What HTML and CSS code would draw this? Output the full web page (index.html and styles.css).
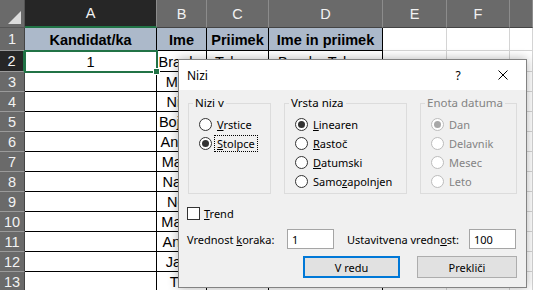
FILE: index.html
```html
<!DOCTYPE html>
<html>
<head>
<meta charset="utf-8">
<title>Nizi</title>
<link rel="stylesheet" href="styles.css">
</head>
<body>

<div class="sheet">
	<div class="corner"><span class="tri"></span></div>
	<div class="ch on">A</div><div class="ch">B</div><div class="ch">C</div><div class="ch">D</div><div class="ch">E</div><div class="ch">F</div><div class="ch"></div>

	<div class="rh">1</div><div class="c b h">Kandidat/ka</div><div class="c b h">Ime</div><div class="c b h">Priimek</div><div class="c b h">Ime in priimek</div><div class="c"></div><div class="c"></div><div class="c"></div>
	<div class="rh on">2</div><div class="c b sel">1</div><div class="c b">Branko</div><div class="c b">Tekavc</div><div class="c b">Branko Tekavc</div><div class="c"></div><div class="c"></div><div class="c"></div>
	<div class="rh">3</div><div class="c b"></div><div class="c b">Miha</div><div class="c b"></div><div class="c b"></div><div class="c"></div><div class="c"></div><div class="c"></div>
	<div class="rh">4</div><div class="c b"></div><div class="c b">Nina</div><div class="c b"></div><div class="c b"></div><div class="c"></div><div class="c"></div><div class="c"></div>
	<div class="rh">5</div><div class="c b"></div><div class="c b">Bojana</div><div class="c b"></div><div class="c b"></div><div class="c"></div><div class="c"></div><div class="c"></div>
	<div class="rh">6</div><div class="c b"></div><div class="c b">Andrej</div><div class="c b"></div><div class="c b"></div><div class="c"></div><div class="c"></div><div class="c"></div>
	<div class="rh">7</div><div class="c b"></div><div class="c b">Marija</div><div class="c b"></div><div class="c b"></div><div class="c"></div><div class="c"></div><div class="c"></div>
	<div class="rh">8</div><div class="c b"></div><div class="c b">Nadja</div><div class="c b"></div><div class="c b"></div><div class="c"></div><div class="c"></div><div class="c"></div>
	<div class="rh">9</div><div class="c b"></div><div class="c b">Nejc</div><div class="c b"></div><div class="c b"></div><div class="c"></div><div class="c"></div><div class="c"></div>
	<div class="rh">10</div><div class="c b"></div><div class="c b">Marko</div><div class="c b"></div><div class="c b"></div><div class="c"></div><div class="c"></div><div class="c"></div>
	<div class="rh">11</div><div class="c b"></div><div class="c b">Anton</div><div class="c b"></div><div class="c b"></div><div class="c"></div><div class="c"></div><div class="c"></div>
	<div class="rh">12</div><div class="c b"></div><div class="c b">Jana</div><div class="c b"></div><div class="c b"></div><div class="c"></div><div class="c"></div><div class="c"></div>
	<div class="rh">13</div><div class="c b"></div><div class="c b">Tim</div><div class="c b"></div><div class="c b"></div><div class="c"></div><div class="c"></div><div class="c"></div>
</div>

<div class="dlg">
	<div class="ttl">
		<span class="name">Nizi</span>
		<span class="help">?</span>
		<svg class="close" width="10" height="10" viewBox="0 0 10 10"><path d="M0.5 0.5L9.5 9.5M9.5 0.5L0.5 9.5" stroke="#000" stroke-width="1" fill="none"/></svg>
	</div>
	<div class="bd">
		<div class="groups">
			<fieldset class="g1">
				<legend>Nizi v</legend>
				<div class="opt"><span class="rb"></span><span><u>V</u>rstice</span></div>
				<div class="opt"><span class="rb on"></span><span class="focus"><u>S</u>tolpce</span></div>
			</fieldset>
			<fieldset class="g2">
				<legend>Vrsta niza</legend>
				<div class="opt"><span class="rb on"></span><span><u>L</u>inearen</span></div>
				<div class="opt"><span class="rb"></span><span><u>R</u>astoč</span></div>
				<div class="opt"><span class="rb"></span><span><u>D</u>atumski</span></div>
				<div class="opt"><span class="rb"></span><span>Samo<u>z</u>apolnjen</span></div>
			</fieldset>
			<fieldset class="g3 off">
				<legend>Enota datuma</legend>
				<div class="opt"><span class="rb on"></span><span>Dan</span></div>
				<div class="opt"><span class="rb"></span><span>Delavnik</span></div>
				<div class="opt"><span class="rb"></span><span>Mesec</span></div>
				<div class="opt"><span class="rb"></span><span>Leto</span></div>
			</fieldset>
		</div>
		<div class="chk"><span class="cb"></span><span><u>T</u>rend</span></div>
		<div class="steps">
			<span class="lbl1">Vrednost <u>k</u>oraka:</span>
			<input class="inp" value="1">
			<span class="lbl2">Ustavitvena vredn<u>o</u>st:</span>
			<input class="inp" value="100">
		</div>
		<div class="btns">
			<button class="btn ok">V redu</button>
			<button class="btn cancel">Prekliči</button>
		</div>
	</div>
</div>

</body>
</html>
```

FILE: styles.css
```css
body { margin: 0; overflow: hidden; background-color: #fff; color: #000; font: normal 14.5px 'Liberation Sans', Arial, sans-serif; }

/* sheet */
.sheet { display: grid; grid-template-columns: 25px 132px 50px 62px 114px 64px 63px 23px; grid-template-rows: 28px 23px 21px repeat(11, 20px); }
.corner { display: flex; justify-content: flex-end; align-items: flex-end; padding: 0 3px 3px 0; background-color: #6a6a6a; border-right: 1px solid #555; border-bottom: 1px solid #555; }
.tri { width: 0; height: 0; border-left: 13px solid transparent; border-bottom: 13px solid #dcdcdc; }
.ch { background-color: #6a6a6a; color: #f2f2f2; border-right: 1px solid #8c8c8c; border-bottom: 1px solid #444; text-align: center; line-height: 28px; }
.ch.on { background-color: #262626; border-bottom: 2px solid #217346; line-height: 27px; }
.rh { display: flex; justify-content: center; align-items: center; background-color: #6a6a6a; color: #f2f2f2; border-bottom: 1px solid #9a9a9a; border-right: 1px solid #444; }
.rh.on { background-color: #262626; border-right: 2px solid #217346; }
.c { display: flex; justify-content: center; align-items: flex-end; padding-bottom: 1px; overflow: hidden; white-space: nowrap; border-right: 1px solid #d4d4d4; border-bottom: 1px solid #d4d4d4; }
.c.b { border-color: #000; }
.c.h { background-color: #acb9ca; font-weight: bold; padding-bottom: 2px; }
.sel { position: relative; z-index: 1; overflow: visible; outline: 2px solid #217346; outline-offset: -1px; }
.sel::after { content: ''; position: absolute; right: -4px; bottom: -4px; width: 5px; height: 5px; background-color: #217346; border: 1px solid #fff; }

/* dialog */
.dlg { position: absolute; left: 178px; top: 59px; width: 349px; height: 229px; box-sizing: border-box; z-index: 5; background-color: #f0f0f0; border: 1px solid #838383; box-shadow: 0 0 10px rgba(0,0,0,.3); font: normal 11px 'Noto Sans', sans-serif; white-space: nowrap; }
.ttl { display: flex; align-items: center; height: 30px; padding-left: 8px; background-color: #fff; font-size: 12px; }
.ttl .name { flex: 1; }
.ttl .help { width: 12px; margin-right: 34px; text-align: center; }
.ttl .close { margin-right: 18px; }
.bd { padding: 5px 9px 0 9px; }
.groups { display: flex; gap: 13px; }
fieldset { margin: 0; padding: 4px 0 2px 10px; min-width: 0; border: 1px solid #dcdcdc; }
legend { margin-left: -6px; padding: 0 2px; line-height: 16px; font-size: 11.5px; }
.g1 { width: 83px; box-sizing: border-box; }
.g2 { width: 123px; box-sizing: border-box; }
.g3 { width: 97px; box-sizing: border-box; }
.opt { display: flex; align-items: center; gap: 5px; height: 19px; }
.rb { display: flex; justify-content: center; align-items: center; width: 13px; height: 13px; box-sizing: border-box; border: 1px solid #333; border-radius: 50%; background-color: #fff; }
.rb.on::after { content: ''; width: 7px; height: 7px; border-radius: 50%; background-color: #333; }
.off { color: #838383; }
.off .rb { border-color: #bcbcbc; }
.off .rb.on::after { background-color: #a8a8a8; }
.focus { margin-left: -3px; padding: 0 2px; line-height: 15px; border: 1px dotted #000; }
.chk { display: flex; align-items: center; gap: 4px; height: 17px; margin: 11px 0 0 -1px; }
.cb { width: 13px; height: 13px; box-sizing: border-box; border: 1px solid #333; background-color: #fff; }
.steps { display: flex; align-items: center; margin: 7px 0 0 -1px; }
.lbl1 { width: 100px; }
.lbl2 { width: 122px; margin-left: 13px; }
.inp { width: 47px; height: 20px; box-sizing: border-box; margin: 0; padding: 0 0 0 4px; background-color: #fff; border: 1px solid #a5a5a5; font: inherit; outline: none; }
.btns { display: flex; justify-content: flex-end; gap: 17px; margin-top: 7px; }
.btn { height: 22px; box-sizing: border-box; margin: 0; padding: 0; background-color: #e1e1e1; border: 1px solid #adadad; font: inherit; color: #000; }
.btn.ok { width: 97px; border: 2px solid #0078d7; }
.btn.cancel { width: 100px; }
```
